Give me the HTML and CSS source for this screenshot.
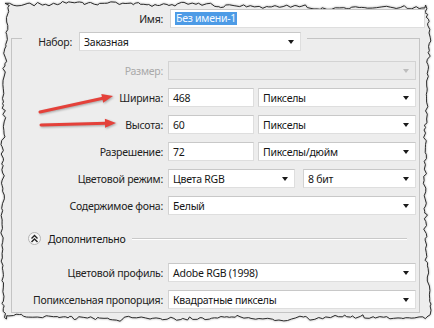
FILE: index.html
```html
<!DOCTYPE html>
<html lang="ru">
<head>
    <meta charset="UTF-8">
    <title>Новый документ</title>
    <link rel="stylesheet" href="styles.css">
</head>
<body>
    <div class="sheet">
        <svg class="torn" width="434" height="328"><path id="torn-path" d=""/></svg>

        <div class="dialog">
            <div class="name-row">
                <span class="lbl">Имя:</span>
                <div class="field"><span class="picked">Без имени-1</span></div>
            </div>

            <fieldset class="group">
                <legend class="preset">
                    <span class="lbl">Набор:</span>
                    <div class="field select preset-select">Заказная<span class="caret"></span></div>
                </legend>

                <div class="row disabled">
                    <span class="lbl">Размер:</span>
                    <div class="field select"><span></span><span class="caret"></span></div>
                </div>
                <div class="row">
                    <span class="lbl">Ширина:</span>
                    <div class="pair">
                        <div class="field">468</div>
                        <div class="field select">Пикселы<span class="caret"></span></div>
                    </div>
                </div>
                <div class="row">
                    <span class="lbl">Высота:</span>
                    <div class="pair">
                        <div class="field">60</div>
                        <div class="field select">Пикселы<span class="caret"></span></div>
                    </div>
                </div>
                <div class="row">
                    <span class="lbl">Разрешение:</span>
                    <div class="pair">
                        <div class="field">72</div>
                        <div class="field select">Пикселы/дюйм<span class="caret"></span></div>
                    </div>
                </div>
                <div class="row">
                    <span class="lbl">Цветовой режим:</span>
                    <div class="pair mode">
                        <div class="field select">Цвета RGB<span class="caret"></span></div>
                        <div class="field select">8 бит<span class="caret"></span></div>
                    </div>
                </div>
                <div class="row">
                    <span class="lbl">Содержимое фона:</span>
                    <div class="field select">Белый<span class="caret"></span></div>
                </div>

                <div class="more">
                    <span class="toggle">
                        <svg width="9" height="9" viewBox="0 0 9 9"><path d="M1.5 4.5 L4.5 1.5 L7.5 4.5 M1.5 8 L4.5 5 L7.5 8" fill="none" stroke="#222" stroke-width="1.4"/></svg>
                    </span>
                    <span>Дополнительно</span>
                    <span class="rule"></span>
                </div>

                <div class="row profile">
                    <span class="lbl">Цветовой профиль:</span>
                    <div class="field select">Adobe RGB (1998)<span class="caret"></span></div>
                </div>
                <div class="row">
                    <span class="lbl">Попиксельная пропорция:</span>
                    <div class="field select">Квадратные пикселы<span class="caret"></span></div>
                </div>
            </fieldset>
        </div>

        <svg class="arrows" width="434" height="328">
            <line x1="40" y1="112" x2="104" y2="98" />
            <polygon points="113,96 103.2,102.8 101.3,94" />
            <line x1="41" y1="125" x2="106" y2="123.3" />
            <polygon points="116,123 105.1,127.8 104.9,118.8" />
        </svg>
    </div>

    <script src="script.js"></script>
</body>
</html>
```

FILE: styles.css
```css
body {
    margin: 0;
    background: #ffffff;
    font-family: "Noto Sans", "DejaVu Sans", sans-serif;
    font-size: 10.5px;
    letter-spacing: -0.25px;
    color: #151515;
}
.sheet {
    position: relative;
    width: 434px;
    height: 328px;
    overflow: hidden;
}
.torn {
    position: absolute;
    left: 0;
    top: 0;
    filter: drop-shadow(0 0 1px rgba(0, 0, 0, 0.35));
}
.torn path {
    fill: #ededed;
    stroke: #2c2c2c;
    stroke-width: 1;
}
.dialog {
    position: relative;
    padding-top: 9px;
}
.lbl {
    text-align: right;
    color: #222222;
    white-space: nowrap;
}
.name-row {
    display: grid;
    grid-template-columns: 163px 255px;
    column-gap: 7px;
    align-items: center;
    height: 19px;
}
.field {
    box-sizing: border-box;
    height: 19px;
    display: flex;
    align-items: center;
    padding: 0 6px 0 4px;
    background: #ffffff;
    border: 1px solid #dedede;
    border-top-color: #c8c8c8;
    border-left-color: #d2d2d2;
    white-space: nowrap;
}
.select {
    justify-content: space-between;
}
.caret {
    width: 0;
    height: 0;
    border-left: 3px solid transparent;
    border-right: 3px solid transparent;
    border-top: 4px solid #1a1a1a;
}
.picked {
    background: #4d9be6;
    color: #f4f9ff;
    padding: 0 1px;
    line-height: 13px;
}
.group {
    margin: -2px 0 0 11px;
    width: 409px;
    box-sizing: border-box;
    min-width: 0;
    padding: 10px 3px 3px 0;
    border: 1px solid #c4c4c4;
}
.preset {
    margin-left: 10px;
    padding: 6px 6px 0 0;
    display: flex;
    align-items: center;
    gap: 7px;
}
.preset .lbl {
    width: 50px;
}
.preset-select {
    width: 222px;
}
.row {
    display: grid;
    grid-template-columns: 151px 1fr;
    column-gap: 5px;
    align-items: center;
    height: 19px;
    margin-top: 8px;
}
.row:first-of-type {
    margin-top: 0;
}
.pair {
    display: grid;
    grid-template-columns: 86px 1fr;
    column-gap: 4px;
}
.pair.mode {
    grid-template-columns: 127px 1fr;
    column-gap: 8px;
}
.disabled .lbl {
    color: #a9a9a9;
}
.disabled .field {
    background: #ebebeb;
    border-color: #d3d3d3;
}
.disabled .caret {
    border-top-color: #bdbdbd;
}
.more {
    display: flex;
    align-items: center;
    height: 19px;
    margin-top: 14px;
    padding: 0 9px 0 16px;
    gap: 7px;
}
.toggle {
    box-sizing: border-box;
    width: 13px;
    height: 13px;
    border-radius: 50%;
    background: #f7f7f7;
    border: 1px solid #b4b4b4;
    display: flex;
    align-items: center;
    justify-content: center;
}
.rule {
    flex: 1;
    margin-left: -1px;
    border-top: 1px solid #c9c9c9;
    border-bottom: 1px solid #ffffff;
}
.row.profile {
    margin-top: 15px;
}
.arrows {
    position: absolute;
    left: 0;
    top: 0;
    filter: drop-shadow(1px 1px 1px rgba(0, 0, 0, 0.3));
}
.arrows line {
    stroke: #e4413a;
    stroke-width: 3;
    stroke-linecap: round;
}
.arrows polygon {
    fill: #e4413a;
}
```

FILE: script.js
```js
// torn paper outline around the dialog
var seed = 17;
function rnd() {
    seed = (seed * 16807) % 2147483647;
    return seed / 2147483647;
}

function edge(points, from, to, base, vertical) {
    var drift = 0;
    var step = from < to ? 1 : -1;
    var p = from;
    while ((to - p) * step > 0) {
        drift += (rnd() - 0.5) * 1.8;
        if (drift > 3) drift = 3;
        if (drift < -3) drift = -3;
        var off = base + drift + (rnd() - 0.5) * 3;
        points.push(vertical ? [off, p] : [p, off]);
        p += step * (1.5 + rnd() * 3.5);
    }
}

var pts = [];
edge(pts, 5, 427, 5, false);
edge(pts, 5, 319, 427, true);
edge(pts, 427, 5, 318, false);
edge(pts, 319, 5, 5, true);

var d = pts.map(function (pt, i) {
    return (i ? 'L' : 'M') + pt[0].toFixed(1) + ' ' + pt[1].toFixed(1);
}).join(' ') + ' Z';

document.getElementById('torn-path').setAttribute('d', d);
```
